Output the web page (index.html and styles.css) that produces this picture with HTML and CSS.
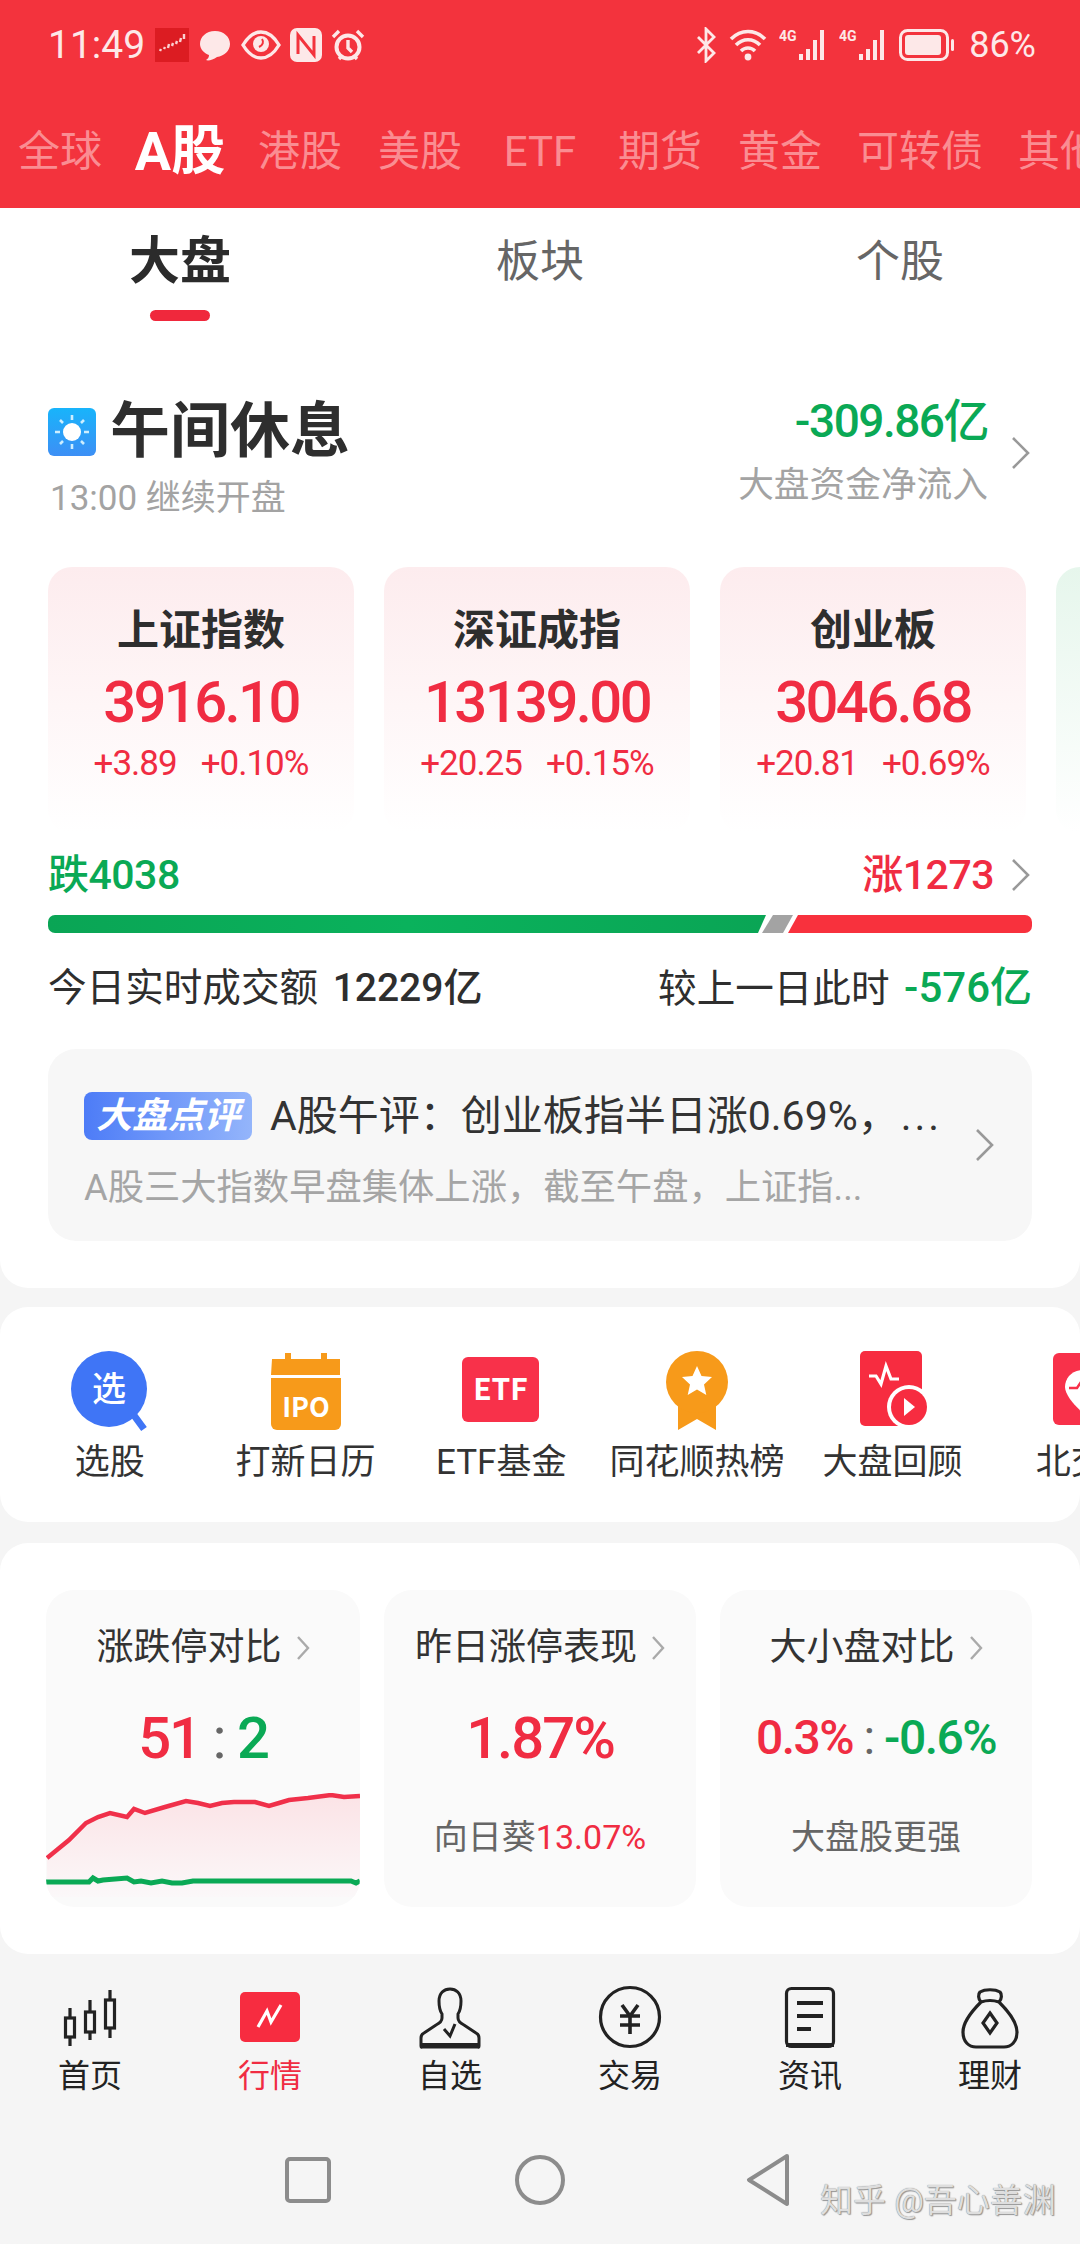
FILE: index.html
```html
<!DOCTYPE html>
<html lang="zh-CN">
<head>
<meta charset="utf-8">
<title>行情</title>
<link rel="stylesheet" href="styles.css">
</head>
<body>
<div class="screen">
  <header class="top">
    <div class="status">
      <div class="status-left">
        <span class="clock">11:49</span>
        <svg class="si" width="34" height="34" viewBox="0 0 34 34"><rect width="34" height="34" fill="#dc1c22"/><path d="M5 23l1-2m3 0l1-2m3 1l1-4m3 2l1-3m3 1l1-3m3 1l1-4m3 1v-5" stroke="#fbd0d0" stroke-width="2.4" fill="none"/></svg>
        <svg class="si" width="34" height="34" viewBox="0 0 34 34"><path d="M17 3c9 0 15 6 15 13s-6 12-13 13c-4 3-9 4-11 3 2-1 3-3 3-5C6 25 2 21 2 16 2 9 8 3 17 3z" fill="#fde8e8"/></svg>
        <svg class="si" width="40" height="30" viewBox="0 0 40 30"><path d="M2 15C8 5 14 2 20 2s12 3 18 13c-6 10-12 13-18 13S8 25 2 15z" fill="none" stroke="#fde8e8" stroke-width="3.4"/><circle cx="20" cy="14" r="8" fill="#fde8e8"/><path d="M21 9c2 3 1 6-3 8" stroke="#f3333d" stroke-width="2" fill="none"/></svg>
        <svg class="si" width="32" height="34" viewBox="0 0 32 34"><rect width="32" height="34" rx="7" fill="#fde8e8"/><path d="M8 26V7l16 20V8" stroke="#f3333d" stroke-width="3" fill="none"/></svg>
        <svg class="si" width="34" height="34" viewBox="0 0 34 34"><circle cx="17" cy="19" r="11.500" fill="none" stroke="#fde8e8" stroke-width="4"/><path d="M17 12v8l4 4M2 9l6-6M32 9l-6-6M8 31l3-3M26 31l-3-3" stroke="#fde8e8" stroke-width="3.4" fill="none"/></svg>
      </div>
      <div class="status-right">
        <svg class="si" width="22" height="36" viewBox="0 0 22 36"><path d="M3 10l16 16-8 8V2l8 8L3 26" fill="none" stroke="#fde8e8" stroke-width="2.8"/></svg>
        <svg class="si wifi" width="38" height="34" viewBox="0 0 38 34"><path d="M2 11c10-10 24-10 34 0M7 17c7-7 17-7 24 0M12 23c4-4 10-4 14 0" fill="none" stroke="#fde8e8" stroke-width="3.6"/><circle cx="19" cy="29" r="3.400" fill="#fde8e8"/></svg>
        <svg class="si sig" width="48" height="34" viewBox="0 0 48 34"><text x="0" y="13" class="g4">4G</text><path d="M20 26h4v6h-4zM27 21h4v11h-4zM34 12h4v20h-4zM41 2h4v30h-4z" fill="#fde8e8"/></svg>
        <svg class="si sig" width="48" height="34" viewBox="0 0 48 34"><text x="0" y="13" class="g4">4G</text><path d="M20 26h4v6h-4zM27 21h4v11h-4zM34 12h4v20h-4zM41 2h4v30h-4z" fill="#fde8e8"/></svg>
        <svg class="si batt" width="56" height="32" viewBox="0 0 56 32"><rect x="1.500" y="1.500" width="47" height="29" rx="7" fill="none" stroke="#fde8e8" stroke-width="3"/><rect x="6" y="6" width="36" height="20" rx="3" fill="#fde8e8"/><rect x="52" y="10" width="3" height="12" rx="1.500" fill="#fde8e8"/></svg>
        <span class="pct">86%</span>
      </div>
    </div>
    <nav class="mkt-tabs">
      <span class="mkt">全球</span>
      <span class="mkt mkt-on">A股</span>
      <span class="mkt">港股</span>
      <span class="mkt">美股</span>
      <span class="mkt">ETF</span>
      <span class="mkt">期货</span>
      <span class="mkt">黄金</span>
      <span class="mkt mkt-wide">可转债</span>
      <span class="mkt">其他</span>
    </nav>
  </header>

  <section class="panel main-panel">
    <nav class="sub-tabs">
      <span class="sub sub-on">大盘</span>
      <span class="sub">板块</span>
      <span class="sub">个股</span>
    </nav>

    <div class="head">
      <div class="head-left">
        <div class="phase">
          <svg width="48" height="48" viewBox="0 0 48 48"><defs><linearGradient id="sky" x1="0" y1="0" x2="0" y2="1"><stop offset="0" stop-color="#18b4fb"/><stop offset="1" stop-color="#3d8ff5"/></linearGradient></defs><rect width="48" height="48" rx="6" fill="url(#sky)"/><circle cx="24" cy="24" r="9" fill="#fff"/><path d="M24 7v5M24 36v5M7 24h5M36 24h5M12 12l3 3M33 33l3 3M36 12l-3 3M15 33l-3 3" stroke="#cdeeff" stroke-width="2.600" fill="none"/></svg>
          <span class="phase-name">午间休息</span>
        </div>
        <div class="phase-sub">13:00 继续开盘</div>
      </div>
      <div class="head-right">
        <div class="flow">
          <div class="flow-val">-309.86亿</div>
          <div class="flow-sub">大盘资金净流入</div>
        </div>
        <svg class="chev" width="22" height="34" viewBox="0 0 22 34"><path d="M3 2l15 15L3 32" fill="none" stroke="#999" stroke-width="2.600"/></svg>
      </div>
    </div>

    <div class="indices">
      <div class="idx">
        <div class="idx-name">上证指数</div>
        <div class="idx-val">3916.10</div>
        <div class="idx-chg"><span>+3.89</span><span>+0.10%</span></div>
      </div>
      <div class="idx">
        <div class="idx-name">深证成指</div>
        <div class="idx-val">13139.00</div>
        <div class="idx-chg"><span>+20.25</span><span>+0.15%</span></div>
      </div>
      <div class="idx">
        <div class="idx-name">创业板</div>
        <div class="idx-val">3046.68</div>
        <div class="idx-chg"><span>+20.81</span><span>+0.69%</span></div>
      </div>
      <div class="idx idx-green"></div>
    </div>

    <div class="breadth">
      <span class="down">跌4038</span>
      <span class="up-wrap"><span class="up">涨1273</span>
        <svg class="chev" width="22" height="34" viewBox="0 0 22 34"><path d="M3 2l15 15L3 32" fill="none" stroke="#999" stroke-width="2.600"/></svg></span>
    </div>
    <div class="bar">
      <svg width="984" height="18" viewBox="0 0 984 18"><defs><linearGradient id="gb" x1="0" x2="1"><stop offset="0" stop-color="#0aa555"/><stop offset=".5" stop-color="#0ab25c"/><stop offset="1" stop-color="#0aa555"/></linearGradient></defs><path d="M0 0H718L710 18H0z" fill="url(#gb)"/><path d="M725 0H745L735 18H714z" fill="#a3a3a3"/><path d="M750 0H984V18H740z" fill="#f8313d"/></svg>
    </div>

    <div class="turnover">
      <span>今日实时成交额 <b class="num">12229亿</b></span>
      <span>较上一日此时 <b class="num num-d down">-576亿</b></span>
    </div>

    <div class="review">
      <div class="review-body">
        <div class="review-top">
          <span class="badge">大盘点评</span>
          <span class="review-title">A股午评：创业板指半日涨0.69%，<span class="ell">...</span></span>
        </div>
        <div class="review-sub">A股三大指数早盘集体上涨，截至午盘，上证指...</div>
      </div>
      <svg class="chev" width="22" height="34" viewBox="0 0 22 34"><path d="M3 2l15 15L3 32" fill="none" stroke="#999" stroke-width="2.600"/></svg>
    </div>
  </section>

  <section class="panel shortcuts">
    <div class="sc">
      <svg width="90" height="84" viewBox="0 0 90 84"><circle cx="44" cy="41" r="38" fill="#3f75f6"/><path d="M68 66l11 15" stroke="#3f75f6" stroke-width="7"/><text x="44" y="53" class="sc-t sc-x">选</text></svg>
      <span>选股</span>
    </div>
    <div class="sc">
      <svg width="90" height="84" viewBox="0 0 90 84"><path d="M11 9h13V3h6v6h30V3h6v6h13a1 1 0 0 1 0 0v16H10z" fill="#f79a1a" transform="translate(0 2)"/><path d="M10 30h70v46a6 6 0 0 1-6 6H16a6 6 0 0 1-6-6z" fill="#f79a1a"/><text x="45" y="69" class="sc-t sc-ipo">IPO</text></svg>
      <span>打新日历</span>
    </div>
    <div class="sc">
      <svg width="90" height="84" viewBox="0 0 90 84"><rect x="6" y="9" width="77" height="65" rx="6" fill="#f8314a"/><text x="44.500" y="52" class="sc-t sc-etf">ETF</text></svg>
      <span>ETF基金</span>
    </div>
    <div class="sc">
      <svg width="90" height="84" viewBox="0 0 90 84"><path d="M26 50v32l19-11 19 11V50z" fill="#f79a1a"/><circle cx="45" cy="34" r="31" fill="#f79a1a"/><path d="M45 18l4.500 10 10.500 1-8 7.500 2.300 10.500L45 41.500l-9.300 5.500 2.300-10.500-8-7.500 10.500-1z" fill="#fff"/></svg>
      <span>同花顺热榜</span>
    </div>
    <div class="sc">
      <svg width="90" height="84" viewBox="0 0 90 84"><rect x="12" y="3" width="62" height="75" rx="5" fill="#f72c40"/><path d="M21 28h7l5 8 5-18 5 13h8" fill="none" stroke="#fff" stroke-width="3.200"/><circle cx="61" cy="59" r="22" fill="#fff"/><circle cx="61" cy="59" r="18" fill="#f72c40"/><path d="M56 50l11 9-11 9z" fill="#fff"/></svg>
      <span>大盘回顾</span>
    </div>
    <div class="sc">
      <svg width="90" height="84" viewBox="0 0 90 84"><rect x="10" y="5" width="72" height="72" rx="6" fill="#f8314a"/><path d="M40 22c11 0 18 8 18 17 0 8-10 19-18 26-8-7-18-18-18-26 0-9 7-17 18-17z" fill="#fff"/><path d="M26 40h8l4-6 4 10 3-4h8" fill="none" stroke="#f8314a" stroke-width="2.500"/></svg>
      <span>北交所</span>
    </div>
  </section>

  <section class="panel insights">
    <div class="ins">
      <div class="ins-title">涨跌停对比<svg class="chev-s" width="14" height="26" viewBox="0 0 14 26"><path d="M2 2l10 11L2 24" fill="none" stroke="#aaa" stroke-width="2.400"/></svg></div>
      <div class="ins-val"><span class="up">51</span><span class="colon"> : </span><span class="down">2</span></div>
      <svg class="ins-chart" width="314" height="104" viewBox="0 0 314 104"><defs><linearGradient id="af" x1="0" y1="0" x2="0" y2="1"><stop offset="0" stop-color="#fbe3e6"/><stop offset="1" stop-color="#fbf8f9"/></linearGradient></defs><path d="M1 65L23 47 40 30 52 24 64 20 81 24 88 16 99 20 119 14 140 8 152 10 164 13 176 10 188 9 209 9 223 13 233 10 243 7 262 5 285 2 298 4 314 3V104H1z" fill="url(#af)"/><path d="M1 65L23 47 40 30 52 24 64 20 81 24 88 16 99 20 119 14 140 8 152 10 164 13 176 10 188 9 209 9 223 13 233 10 243 7 262 5 285 2 298 4 314 3" fill="none" stroke="#f0304a" stroke-width="4.500"/><path d="M0 89H43L47 85 52 88 57 87 81 85 88 89 95 88 105 90 116 88 126 90 136 90 147 88H305L310 90 314 88" fill="none" stroke="#0aa955" stroke-width="5"/></svg>
    </div>
    <div class="ins">
      <div class="ins-title">昨日涨停表现<svg class="chev-s" width="14" height="26" viewBox="0 0 14 26"><path d="M2 2l10 11L2 24" fill="none" stroke="#aaa" stroke-width="2.400"/></svg></div>
      <div class="ins-val"><span class="up">1.87%</span></div>
      <div class="ins-sub">向日葵<span class="up">13.07%</span></div>
    </div>
    <div class="ins">
      <div class="ins-title">大小盘对比<svg class="chev-s" width="14" height="26" viewBox="0 0 14 26"><path d="M2 2l10 11L2 24" fill="none" stroke="#aaa" stroke-width="2.400"/></svg></div>
      <div class="ins-val ins-val-s"><span class="up">0.3%</span><span class="colon"> : </span><span class="down">-0.6%</span></div>
      <div class="ins-sub">大盘股更强</div>
    </div>
  </section>

  <footer class="bottom">
    <nav class="tabbar">
      <div class="tb">
        <svg width="66" height="66" viewBox="0 0 66 66" fill="none" stroke="#222" stroke-width="3.200"><path d="M13 24v38M33 16v40M53 6v48" /><rect x="8.500" y="34" width="9" height="19" fill="#f5f5f5"/><rect x="28.500" y="28" width="9" height="20" fill="#f5f5f5"/><rect x="48.500" y="16" width="9" height="28" fill="#f5f5f5"/></svg>
        <span>首页</span>
      </div>
      <div class="tb tb-on">
        <svg width="66" height="66" viewBox="0 0 66 66"><rect x="3" y="8" width="60" height="50" rx="5" fill="#f72c40"/><path d="M21 43l9-16 4 11 10-17" fill="none" stroke="#fff" stroke-width="3.200"/></svg>
        <span>行情</span>
      </div>
      <div class="tb">
        <svg width="66" height="66" viewBox="0 0 66 66" fill="none" stroke="#222" stroke-width="3"><path d="M25 30c-2-3-3-8-3-13C22 9 27 5 33 5s11 4 11 12c0 5-1 10-3 13v4c0 3 2 5 6 7l12 8c2 1 3 3 3 5v8c0 2-1 1-2 1H6c-1 0-2 1-2-1v-8c0-2 1-4 3-5l12-8c4-2 6-4 6-7z"/><path d="M4 61h58" stroke-width="4"/><path d="M27 45l6 7 5-12"/></svg>
        <span>自选</span>
      </div>
      <div class="tb">
        <svg width="66" height="66" viewBox="0 0 66 66" fill="none" stroke="#222" stroke-width="3.200"><circle cx="33" cy="33" r="29.500"/><path d="M25 21l8 11 8-11M23 32h20M23 41h20M33 32v18" stroke-width="3.600"/></svg>
        <span>交易</span>
      </div>
      <div class="tb">
        <svg width="66" height="66" viewBox="0 0 66 66" fill="none" stroke="#222" stroke-width="3.200"><rect x="9.500" y="4.500" width="47" height="58" rx="5"/><path d="M9 61h48" stroke-width="4"/><path d="M20 19h26M20 32h26M20 45h14" stroke-width="3.800"/></svg>
        <span>资讯</span>
      </div>
      <div class="tb">
        <svg width="66" height="66" viewBox="0 0 66 66" fill="none" stroke="#222" stroke-width="3.200"><path d="M24 18c-3-3-3-8-1-10 5-3 15-3 20 0 2 2 2 7-1 10"/><path d="M24 18c6-2 12-2 18 0 8 8 18 20 18 30 0 10-6 15-13 15H19C12 63 6 58 6 48c0-10 10-22 18-30z"/><path d="M33 29l7 10-7 10-7-10z"/></svg>
        <span>理财</span>
      </div>
    </nav>
    <div class="sysnav">
      <svg width="46" height="46" viewBox="0 0 46 46"><rect x="2" y="2" width="42" height="42" rx="3" fill="none" stroke="#8c8c8c" stroke-width="4"/></svg>
      <svg width="50" height="50" viewBox="0 0 50 50"><circle cx="25" cy="25" r="23" fill="none" stroke="#8c8c8c" stroke-width="4"/></svg>
      <svg class="sys-back" width="46" height="54" viewBox="0 0 46 54"><path d="M42 3L4 27l38 24z" fill="none" stroke="#8c8c8c" stroke-width="4" stroke-linejoin="round"/></svg>
    </div>
    <div class="watermark">知乎 @吾心善渊</div>
  </footer>
</div>
</body>
</html>
```
FILE: styles.css
```css
* { box-sizing: border-box; }
html, body { margin: 0; padding: 0; }
body {
  background: #f5f5f5;
  font-family: Roboto, "Noto Sans CJK SC", sans-serif;
  color: #333;
}
.screen { width: 1080px; height: 2244px; overflow: hidden; position: relative; }
svg { display: block; flex: none; }

.up { color: #f02c42; }
.down { color: #0aa955; }
b { font-weight: 500; }

/* header */
.top { background: #f3333d; height: 208px; }
.status { display: flex; justify-content: space-between; align-items: center; padding: 2px 44px 0 48px; height: 88px; color: #fde8e8; }
.status-left, .status-right { display: flex; align-items: center; }
.status-left { gap: 9px; }
.status-right { gap: 12px; }
.clock { font-size: 39px; width: 98px; }
.pct { font-size: 36px; margin-left: 2px; }
.g4 { font-size: 14px; font-weight: 700; fill: #fde8e8; font-family: Roboto, sans-serif; }
.mkt-tabs { display: flex; height: 120px; align-items: center; white-space: nowrap; padding-top: 8px; }
.mkt { flex: none; width: 120px; text-align: center; font-size: 42px; color: #fa8d92; line-height: 60px; }
.mkt-on { color: #fff; font-size: 54px; font-weight: 700; }
.mkt-wide { width: 160px; }

/* panels */
.panel { background: #fff; }
.main-panel { height: 1080px; padding: 0 48px; border-radius: 0 0 28px 28px; overflow: hidden; }
.sub-tabs { display: flex; margin: 0 -48px; height: 113px; }
.sub { position: relative; flex: 1; text-align: center; font-size: 44px; color: #666; line-height: 108px; }
.sub-on { color: #2b2b2b; font-size: 51px; font-weight: 700; }
.sub-on::after { content: ""; position: absolute; left: 150px; bottom: 0; width: 60px; height: 11px; border-radius: 6px; background: #f0283c; }

.head { display: flex; justify-content: space-between; margin-top: 75px; height: 171px; }
.phase { display: flex; align-items: center; gap: 14px; height: 72px; }
.phase-name { font-size: 60px; font-weight: 700; color: #2e2e2e; line-height: 72px; }
.phase-sub { font-size: 35px; color: #a3a3a3; line-height: 50px; margin-top: 6px; padding-left: 2px; }
.head-right { display: flex; align-items: center; gap: 22px; height: 114px; }
.flow { text-align: right; }
.flow-val { font-size: 46px; letter-spacing: -1.500px; font-weight: 500; color: #0aa955; line-height: 46px; }
.flow-sub { font-size: 35.700px; color: #a3a3a3; line-height: 48px; margin-top: 17px; }
.chev { flex: none; }

.indices { display: flex; gap: 30px; height: 266px; }
.idx { flex: none; width: 306px; height: 266px; border-radius: 24px; background: linear-gradient(#fdecee, #fff); text-align: center; padding-top: 36px; }
.idx-green { background: linear-gradient(#e6f6ec, #fff); }
.idx-name { font-size: 42px; font-weight: 700; color: #2e2e2e; line-height: 56px; }
.idx-val { font-size: 58px; letter-spacing: -2.600px; font-weight: 500; color: #f02c42; line-height: 68px; margin-top: 9px; }
.idx-chg { display: flex; justify-content: center; gap: 24px; font-size: 35px; letter-spacing: -1px; color: #f02c42; line-height: 44px; margin-top: 6px; }

.breadth { display: flex; justify-content: space-between; align-items: center; margin-top: 20px; height: 44px; font-size: 41px; letter-spacing: -.5px; font-weight: 500; line-height: 44px; }
.up-wrap { display: flex; align-items: center; gap: 16px; }
.bar { margin-top: 18px; height: 18px; border-radius: 7px; overflow: hidden; }
.turnover { display: flex; justify-content: space-between; margin-top: 31px; height: 48px; font-size: 38.600px; line-height: 48px; color: #2e2e2e; }
.num { font-size: 39px; margin-left: 5px; }
.num-d { font-size: 42px; }

.review { display: flex; align-items: center; justify-content: space-between; margin-top: 37px; height: 192px; background: #f7f7f7; border-radius: 28px; padding: 0 36px; }
.review-body { width: 880px; padding-top: 14px; }
.review-top { display: flex; align-items: center; gap: 18px; }
.badge { flex: none; width: 168px; height: 48px; border-radius: 8px; background: linear-gradient(90deg, #4d7cf7, #94b5fb); color: #fff; font-size: 36px; font-weight: 700; font-style: italic; line-height: 48px; text-align: center; }
.review-title { font-size: 41px; color: #333; white-space: nowrap; line-height: 48px; }
.ell { letter-spacing: 3px; margin-left: 2px; }
.review-sub { font-size: 36.300px; color: #a5a5a5; white-space: nowrap; line-height: 48px; margin-top: 24px; }

/* shortcuts */
.shortcuts { display: flex; margin-top: 19px; height: 215px; padding: 41px 0 0 12px; border-radius: 28px; overflow: hidden; }
.sc { flex: none; width: 195.700px; display: flex; flex-direction: column; align-items: center; font-size: 35px; color: #333; line-height: 46px; white-space: nowrap; gap: 8px; }
.sc-t { font-family: "Noto Sans CJK SC", sans-serif; fill: #fff; text-anchor: middle; font-weight: 700; }
.sc-x { font-size: 34px; font-weight: 500; }
.sc-ipo { font-size: 27px; }
.sc-etf { font-size: 30px; }

/* insights */
.insights { display: grid; grid-template-columns: 314px 312px 312px; gap: 24px; margin-top: 21px; height: 411px; padding: 47px 48px 0 46px; border-radius: 28px; overflow: hidden; }
.ins { height: 317px; background: #fafafa; border-radius: 28px; text-align: center; overflow: hidden; }
.ins-title { display: flex; justify-content: center; align-items: center; gap: 14px; font-size: 37px; line-height: 50px; margin-top: 33px; padding-left: 0; color: #333; }
.chev-s { flex: none; }
.ins-val { font-size: 58px; letter-spacing: -2px; font-weight: 500; line-height: 70px; margin-top: 30px; height: 70px; }
.ins-val-s { font-size: 48px; letter-spacing: -1.500px; }
.colon { color: #666; font-weight: 400; }
.ins-sub { font-size: 34px; color: #666; line-height: 46px; margin-top: 41px; }
.ins-chart { margin-top: 20px; }

/* bottom */
.bottom { position: relative; height: 290px; }
.tabbar { display: grid; grid-template-columns: repeat(6, 180px); padding-top: 30px; }
.tb { display: flex; flex-direction: column; align-items: center; font-size: 32px; color: #222; line-height: 44px; gap: 4px; }
.tb-on { color: #f02c42; }
.sysnav { display: flex; justify-content: center; align-items: center; gap: 184px; margin-top: 54px; height: 56px; }
.sys-back { margin: 0 4px 0 -4px; }
.watermark { position: absolute; left: 820px; top: 222px; font-size: 33px; line-height: 50px; color: #dedede; text-shadow: 0 0 1px #777, 1px 1px 1px #999; white-space: nowrap; }
```
